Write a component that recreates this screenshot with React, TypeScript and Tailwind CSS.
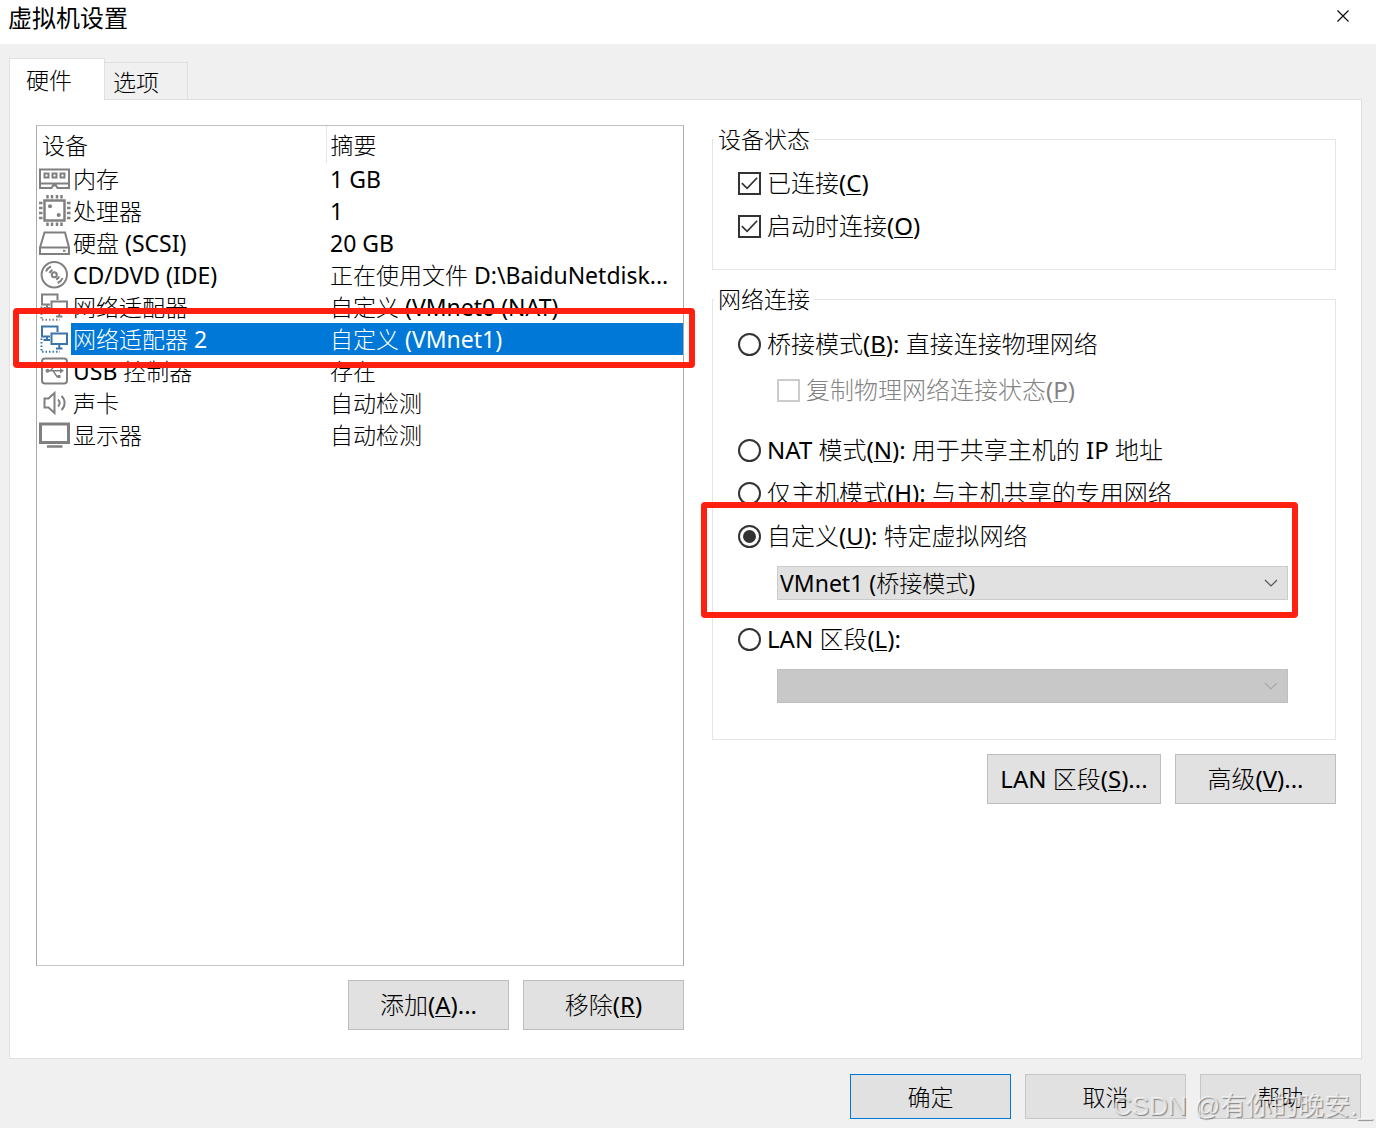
import type { ReactNode } from "react";
import clsx from "clsx";

type IconName = "memory" | "cpu" | "disk" | "disc" | "network" | "usb" | "sound" | "display";

const DEVICES: { icon: IconName; name: string; summary: string; selected?: boolean }[] = [
  { icon: "memory", name: "内存", summary: "1 GB" },
  { icon: "cpu", name: "处理器", summary: "1" },
  { icon: "disk", name: "硬盘 (SCSI)", summary: "20 GB" },
  { icon: "disc", name: "CD/DVD (IDE)", summary: "正在使用文件 D:\\BaiduNetdisk..." },
  { icon: "network", name: "网络适配器", summary: "自定义 (VMnet0 (NAT)" },
  { icon: "network", name: "网络适配器 2", summary: "自定义 (VMnet1)", selected: true },
  { icon: "usb", name: "USB 控制器", summary: "存在" },
  { icon: "sound", name: "声卡", summary: "自动检测" },
  { icon: "display", name: "显示器", summary: "自动检测" },
];

const ICON_SHAPES: Record<IconName, ReactNode> = {
  memory: (
    <>
      <path d="M1 6.500h29v18.500H18.500l-1.500-2.500h-3l-1.500 2.500H1zM1 20.500h29" />
      <path d="M5.500 10.500h4v4h-4zM13.500 10.500h4v4h-4zM21.500 10.500h4v4h-4z" />
    </>
  ),
  cpu: (
    <>
      <path d="M5.500 5.500h20v20h-20z" strokeWidth="2.500" />
      <path d="M0 8h3.500M0 13h3.500M0 18h3.500M0 23h3.500M28 8h3.500M28 13h3.500M28 18h3.500M28 23h3.500" strokeWidth="2.500" />
      <path d="M8.500 0v3.500M13 0v3.500M18 0v3.500M22.500 0v3.500M8.500 27.500V31M13 27.500V31M18 27.500V31M22.500 27.500V31" strokeWidth="2.500" />
      <circle cx="11" cy="11.300" r="2" fill="currentColor" stroke="none" />
      <circle cx="19.700" cy="20" r="2" fill="currentColor" stroke="none" />
    </>
  ),
  disk: (
    <>
      <path d="M1 20.500 5.500 5.500h20.500L30 20.500v6.500H1zM1 20.500h29" />
      <path d="M24 23.800h2.500" />
    </>
  ),
  disc: (
    <>
      <circle cx="15.300" cy="15.700" r="12.700" />
      <circle cx="15.300" cy="15.700" r="2.500" />
      <path d="M7 12.500a9 9 0 0 1 5-5M10.500 14a5.500 5.500 0 0 1 3-3M23.600 19a9 9 0 0 1-5 5M20.100 17.500a5.500 5.500 0 0 1-3 3" />
    </>
  ),
  network: (
    <>
      <path d="M11 13.500H3v-10h15.500V9M8 13.500V17M4.500 17H11" />
      <path d="M12.500 10.500H28v10.500H12.500zM20.300 21v4M17 25.500h6.500" />
      <path d="M2.500 15.500V29M3 28.800h18" strokeDasharray="1.500 2" />
    </>
  ),
  usb: (
    <>
      <rect x="3" y="3.500" width="25" height="25" rx="3" />
      <path d="M8 15.700h14M11.500 15.700l4-5H19M14 15.700l4 6h2" strokeWidth="1.500" />
      <circle cx="8.500" cy="15.700" r="2" fill="currentColor" stroke="none" />
      <path d="M21 13l4 2.700-4 2.700zM18 9h3v3h-3zM18.500 20h3v3h-3z" fill="currentColor" stroke="none" />
    </>
  ),
  sound: (
    <>
      <path d="M5.500 11.500h4L15.500 6v20l-6-5.500h-4z" />
      <path d="M19 12.500a4.500 4.500 0 0 1 0 7M22.500 9a9.500 9.500 0 0 1 0 14" />
    </>
  ),
  display: (
    <>
      <path d="M1.500 5h28v18.500h-28z" strokeWidth="3" />
      <path d="M8 27.500h15.500" strokeWidth="2.500" />
    </>
  ),
};

function DeviceIcon({ name, selected }: { name: IconName; selected?: boolean }) {
  return (
    <svg
      viewBox="0 0 32 32"
      className={clsx("size-8 shrink-0", selected ? "text-[#3a74a8]" : "text-[#808080]")}
      fill="none"
      stroke="currentColor"
      strokeWidth="2"
      aria-hidden="true"
    >
      {ICON_SHAPES[name]}
    </svg>
  );
}

function Key({ children }: { children: string }) {
  return (
    <>
      (<span className="underline decoration-1 underline-offset-2">{children}</span>)
    </>
  );
}

function Checkbox({ children, checked, disabled }: { children: ReactNode; checked?: boolean; disabled?: boolean }) {
  return (
    <label className={clsx("flex h-8 items-center gap-1.5 text-2xl leading-8", disabled && "text-[#838383]")}>
      <span className="grid">
        <input
          type="checkbox"
          defaultChecked={checked}
          disabled={disabled}
          className="peer col-start-1 row-start-1 size-[23px] appearance-none border-2 border-[#333] bg-white disabled:border-[#ccc]"
        />
        <svg
          viewBox="0 0 24 24"
          className="pointer-events-none invisible col-start-1 row-start-1 size-[23px] peer-checked:visible"
          fill="none"
          stroke="#333"
          strokeWidth="1.800"
          aria-hidden="true"
        >
          <path d="M4 11.500l5.500 5.500L20 6" />
        </svg>
      </span>
      <span>{children}</span>
    </label>
  );
}

function Radio({ children, checked }: { children: ReactNode; checked?: boolean }) {
  return (
    <label className="flex h-8 items-center gap-1.5 text-2xl leading-8">
      <input
        type="radio"
        name="network"
        defaultChecked={checked}
        className="grid size-[23px] appearance-none place-items-center rounded-full border-2 border-[#333] bg-white checked:before:size-[13px] checked:before:rounded-full checked:before:bg-[#333]"
      />
      <span>{children}</span>
    </label>
  );
}

function Dropdown({ label, value, disabled }: { label: string; value?: string; disabled?: boolean }) {
  return (
    <div className="mr-[47px] ml-[39px] grid items-center">
      <select
        aria-label={label}
        disabled={disabled}
        className="col-start-1 row-start-1 h-[34px] w-full appearance-none border border-[#ccc] bg-[#e1e1e1] pl-0.5 leading-8 text-black opacity-100 disabled:border-[#bfbfbf] disabled:bg-[#c8c8c8]"
      >
        {value && <option>{value}</option>}
      </select>
      <svg
        viewBox="0 0 14 8"
        className={clsx(
          "pointer-events-none col-start-1 row-start-1 mr-2.5 h-2 w-3.5 justify-self-end",
          disabled ? "text-[#a8a8a8]" : "text-[#555]",
        )}
        fill="none"
        stroke="currentColor"
        strokeWidth="1.200"
        aria-hidden="true"
      >
        <path d="M1 1l6 6 6-6" />
      </svg>
    </div>
  );
}

function Button({ children, className }: { children: ReactNode; className?: string }) {
  return (
    <button type="button" className={clsx("border bg-[#e1e1e1] text-center", className)}>
      {children}
    </button>
  );
}

function DeviceTable() {
  return (
    <div className="relative flex-1 border border-[#a9a9a9] border-t-[#c0c0c0] border-b-[#c8c8c8]">
      <table className="w-full table-fixed text-left">
        <thead>
          <tr className="h-[37px]">
            <th className="w-[289px] border-r border-[#e5e5e5] pl-[5px] font-normal">设备</th>
            <th className="pl-1 font-normal">摘要</th>
          </tr>
        </thead>
        <tbody>
          {DEVICES.map((device) => (
            <tr key={device.name} className="h-8 leading-8">
              <td className="pl-0.5">
                <div className="flex">
                  <DeviceIcon name={device.icon} selected={device.selected} />
                  <span className={clsx("h-8 flex-1 pl-0.5", device.selected && "bg-[#0078d7] text-white")}>
                    {device.name}
                  </span>
                </div>
              </td>
              <td className={clsx("truncate pl-1", device.selected && "bg-[#0078d7] text-white")}>{device.summary}</td>
            </tr>
          ))}
        </tbody>
      </table>
      <div className="pointer-events-none absolute top-[182px] -right-3 -left-6 h-[60px] rounded-sm border-6 border-[#ff2012]" />
    </div>
  );
}

export default function App() {
  return (
    <main className="relative flex min-h-screen flex-col overflow-hidden bg-[#f0f0f0] font-['Noto_Sans','Noto_Sans_CJK_SC_Light','Noto_Sans_CJK_SC',sans-serif] text-[23px] leading-8 text-black">
      <header className="flex h-11 items-start justify-between bg-white pr-[27px] pl-2">
        <h1 className="pt-px font-['Noto_Sans_CJK_SC',sans-serif] text-2xl leading-8">虚拟机设置</h1>
        <button type="button" aria-label="关闭" className="mt-2.5">
          <svg viewBox="0 0 12 12" className="size-3" fill="none" stroke="#111" strokeWidth="1.300" aria-hidden="true">
            <path d="M.5.500l11 11M11.500.500l-11 11" />
          </svg>
        </button>
      </header>

      <div className="flex flex-1 flex-col px-[9px] pt-3.5 pr-3.5 pb-[9px]">
        <div role="tablist" className="flex items-end">
          <button
            type="button"
            role="tab"
            aria-selected="true"
            className="relative -mb-px h-[42px] w-24 border border-b-0 border-[#e0e0e0] bg-white pl-4 text-left"
          >
            硬件
          </button>
          <button
            type="button"
            role="tab"
            aria-selected="false"
            className="h-[37px] w-[83px] border border-b-0 border-l-0 border-[#e0e0e0] pt-0.5 pl-2 text-left"
          >
            选项
          </button>
        </div>

        <div className="grid flex-1 grid-cols-[648fr_624fr] gap-7 border border-[#e0e0e0] bg-white pt-[25px] pr-[25px] pb-7 pl-[26px]">
          <section className="flex flex-col">
            <DeviceTable />
            <div className="mt-3.5 flex justify-end gap-3.5 text-2xl">
              <Button className="h-[50px] w-[161px] border-[#bdbdbd]">
                添加
                <Key>A</Key>...
              </Button>
              <Button className="h-[50px] w-[161px] border-[#bdbdbd]">
                移除
                <Key>R</Key>
              </Button>
            </div>
          </section>

          <section className="-mt-0.5">
            <fieldset className="h-[147px] border border-[#e5e5e5] pl-[25px]">
              <legend className="-ml-6 px-1">设备状态</legend>
              <div className="mt-3 flex flex-col gap-[11px]">
                <Checkbox checked>
                  已连接
                  <Key>C</Key>
                </Checkbox>
                <Checkbox checked>
                  启动时连接
                  <Key>O</Key>
                </Checkbox>
              </div>
            </fieldset>

            <fieldset className="relative mt-[13px] border border-[#e5e5e5] pb-9 pl-[25px]">
              <legend className="-ml-6 px-1">网络连接</legend>
              <div className="mt-[13px]">
                <Radio>
                  桥接模式
                  <Key>B</Key>: 直接连接物理网络
                </Radio>
                <div className="mt-3.5 ml-[39px]">
                  <Checkbox disabled>
                    复制物理网络连接状态
                    <Key>P</Key>
                  </Checkbox>
                </div>
                <div className="mt-7 flex flex-col gap-[11px]">
                  <Radio>
                    NAT 模式
                    <Key>N</Key>: 用于共享主机的 IP 地址
                  </Radio>
                  <Radio>
                    仅主机模式
                    <Key>H</Key>: 与主机共享的专用网络
                  </Radio>
                  <Radio checked>
                    自定义
                    <Key>U</Key>: 特定虚拟网络
                  </Radio>
                </div>
                <div className="pt-3.5">
                  <Dropdown label="特定虚拟网络" value="VMnet1 (桥接模式)" />
                </div>
                <div className="mt-[23px]">
                  <Radio>
                    LAN 区段
                    <Key>L</Key>:
                  </Radio>
                </div>
                <div className="pt-3.5">
                  <Dropdown label="LAN 区段" disabled />
                </div>
              </div>
              <div className="pointer-events-none absolute right-[37px] bottom-[121px] -left-3 h-[116px] rounded-sm border-6 border-[#ff2012]" />
            </fieldset>

            <div className="mt-3.5 flex justify-end gap-3.5 text-2xl">
              <Button className="h-[50px] w-[174px] border-[#bdbdbd]">
                LAN 区段
                <Key>S</Key>...
              </Button>
              <Button className="h-[50px] w-[161px] border-[#bdbdbd]">
                高级
                <Key>V</Key>...
              </Button>
            </div>
          </section>
        </div>
      </div>

      <footer className="flex justify-end gap-3.5 px-[15px] pt-1.5 pb-[9px]">
        <Button className="h-[45px] w-[161px] border-[#0078d7]">确定</Button>
        <Button className="h-[45px] w-[161px] border-[#c6c6c6]">取消</Button>
        <Button className="h-[45px] w-[161px] border-[#c6c6c6]">帮助</Button>
      </footer>

      <p className="pointer-events-none absolute right-1 bottom-1.5 font-['Liberation_Sans','Noto_Sans_CJK_SC',sans-serif] text-[26px] leading-8 text-white/70 [text-shadow:1px_1px_1px_rgb(0_0_0/0.4)]">
        CSDN @有你的晚安._
      </p>
    </main>
  );
}
